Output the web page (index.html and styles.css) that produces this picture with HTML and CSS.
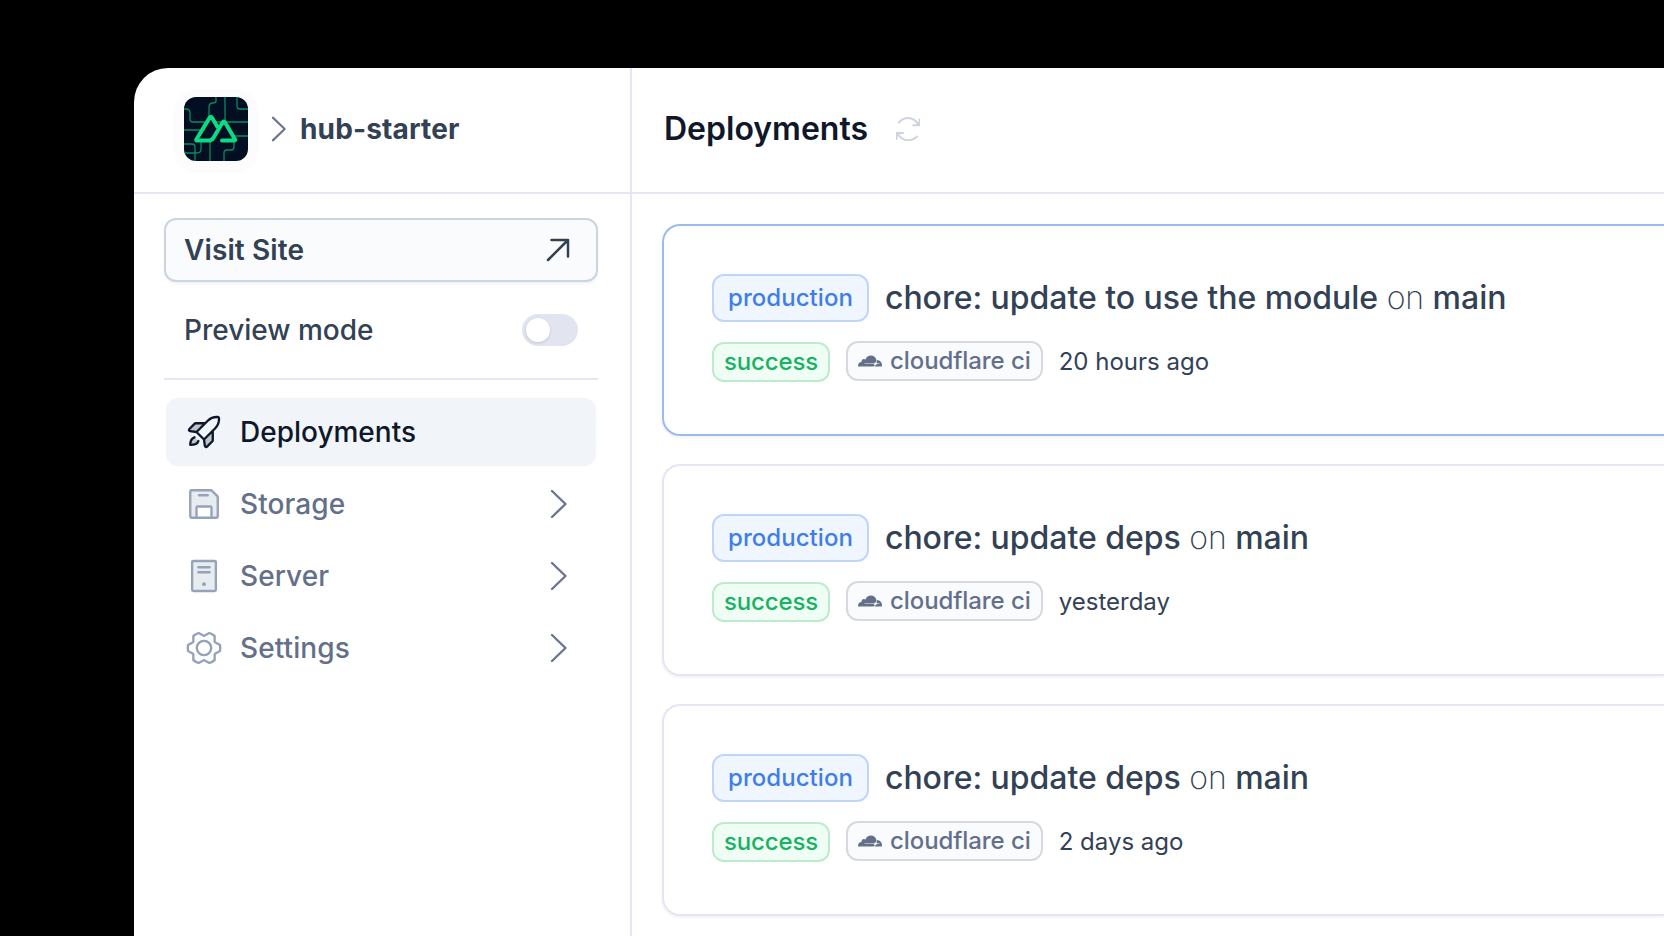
FILE: index.html
```html
<!DOCTYPE html>
<html lang="en">
<head>
<meta charset="utf-8">
<title>Deployments</title>
<link rel="stylesheet" href="styles.css">
</head>
<body>
<svg width="0" height="0" class="sprite" aria-hidden="true">
  <symbol id="caret" viewBox="0 0 20 32"><path d="M3 3l13.500 13L3 29" fill="none" stroke="currentColor" stroke-width="2.400" stroke-linecap="round" stroke-linejoin="round"/></symbol>
  <symbol id="cloud" viewBox="0 0 24 24"><path fill="currentColor" d="M16.5088 16.8447c.1475-.5068.0908-.9707-.1553-1.3154-.2246-.3164-.6045-.499-1.0615-.5205l-8.6592-.1123a.1559.1559 0 0 1-.1333-.0713c-.0283-.042-.0351-.0986-.021-.1553.0278-.084.1123-.1484.2036-.1562l8.7359-.1123c1.0351-.0489 2.1601-.8868 2.5537-1.9136l.499-1.3013c.0215-.0561.0293-.1128.0147-.168-.5625-2.5463-2.835-4.4453-5.5499-4.4453-2.5039 0-4.6284 1.6177-5.3876 3.8614-.4927-.3658-1.1187-.5625-1.794-.499-1.2026.119-2.1665 1.083-2.2861 2.2856-.0283.31-.0069.6128.0635.894C1.5683 13.171 0 14.7754 0 16.752c0 .1748.0142.3515.0352.5273.0141.083.0844.1475.1689.1475h15.9814c.0909 0 .1758-.0645.2032-.1553l.12-.4268zm2.7568-5.5634c-.0771 0-.1611 0-.2383.0112-.0566 0-.1054.0415-.127.0976l-.3378 1.1744c-.1475.5068-.0918.9707.1543 1.3164.2256.3164.6055.498 1.0625.5195l1.8437.1133c.0557 0 .1055.0263.1329.0703.0283.043.0351.1074.0214.1562-.0283.084-.1132.1485-.204.1553l-1.921.1123c-1.041.0488-2.1582.8867-2.5527 1.914l-.1406.3585c-.0283.0713.0215.1416.0986.1416h6.5977c.0771 0 .1474-.0489.169-.126.1122-.4082.1757-.837.1757-1.2803 0-2.6025-2.125-4.727-4.7344-4.727"/></symbol>
</svg>
<div class="window">
  <aside class="sidebar">
    <div class="project">
      <span class="logo">
        <svg viewBox="0 0 64 64" width="64" height="64">
          <g class="circuit">
            <path d="M0 12h2q4 0 4 4v6q0 3 3 3h55M32 0v4q0 2-3 2q-4 0-4 4v14M41 0v25M53 0v9q0 3 3 3h8M0 33h18M64 39H48M0 47h8q3 0 3 3v14M17 44v8q0 4-4 4H0M26 44v20M50 44v6q0 3-3 3h-4q-3 0-3 3v8"/>
          </g>
          <path class="shade" d="M13 43.500L26.500 20.500 33 30.500l6.500-6.500L52 43.500Z"/>
          <path class="mark" d="M13 43.500h12c2 0 3.300-.8 4.500-2.800L38.700 25.300c.7-1.200 1.500-1.200 2.200 0L51 42.300c.4.800 0 1.200-.8 1.200H38M13 43.500c-.8 0-1-.4-.5-1.200L25.700 20.600c.7-1.200 1.500-1.200 2.200 0l5.600 9.400"/>
        </svg>
      </span>
      <svg class="crumb" viewBox="0 0 20 32"><use href="#caret"/></svg>
      <span class="project-name">hub-starter</span>
    </div>
    <div class="side-body">
      <a class="visit"><span>Visit Site</span>
        <svg width="24" height="24" viewBox="0 0 24 24"><path d="M2 22L22 2M5.500 2H22V18.500"/></svg>
      </a>
      <div class="preview"><span>Preview mode</span><span class="toggle"><span class="knob"></span></span></div>
      <nav class="nav">
        <a class="item active">
          <svg class="icon" viewBox="0 0 256 256"><path class="tone" d="M184 120v61.650a8 8 0 0 1-2.340 5.650l-34.350 34.350a8 8 0 0 1-13.570-4.530L128 176ZM136 72H74.350a8 8 0 0 0-5.650 2.340L34.350 108.690a8 8 0 0 0 4.530 13.570L80 128ZM40 210c28 0 48-8 52-26L68 163C50 170 40 188 40 210Z"/><path class="line" d="M92 186C87 202 68 210 40 210c0-26 10-42 27-48M184 120v61.650a8 8 0 0 1-2.340 5.650l-34.350 34.350a8 8 0 0 1-13.570-4.530L128 176M136 72H74.350a8 8 0 0 0-5.650 2.340L34.350 108.690a8 8 0 0 0 4.530 13.570L80 128M128 176 80 128 152.230 55.800C173.540 34 198 31 216.500 32a8 8 0 0 1 7.500 7.500c1 18.500-2 43-23.800 64.300Z"/></svg>
          <span>Deployments</span>
        </a>
        <a class="item">
          <svg class="icon" viewBox="0 0 256 256"><path class="tone" d="M216 83.310V208a8 8 0 0 1-8 8H176V152a8 8 0 0 0-8-8H88a8 8 0 0 0-8 8v64H48a8 8 0 0 1-8-8V48a8 8 0 0 1 8-8H172.690a8 8 0 0 1 5.650 2.340l35.320 35.320a8 8 0 0 1 2.340 5.650Z"/><path class="line" d="M216 83.310V208a8 8 0 0 1-8 8H48a8 8 0 0 1-8-8V48a8 8 0 0 1 8-8H172.690a8 8 0 0 1 5.650 2.340l35.320 35.320a8 8 0 0 1 2.340 5.650ZM80 216V152a8 8 0 0 1 8-8h80a8 8 0 0 1 8 8v64M152 72H96"/></svg>
          <span>Storage</span><svg class="chev" viewBox="0 0 20 32"><use href="#caret"/></svg>
        </a>
        <a class="item">
          <svg class="icon" viewBox="0 0 256 256"><rect class="tone" x="52" y="32" width="152" height="192" rx="8"/><rect class="line" x="52" y="32" width="152" height="192" rx="8"/><path class="line" d="M92 72h72M92 104h72"/><circle cx="128" cy="180" r="12" fill="currentColor"/></svg>
          <span>Server</span><svg class="chev" viewBox="0 0 20 32"><use href="#caret"/></svg>
        </a>
        <a class="item">
          <svg class="icon" viewBox="0 0 256 256"><circle class="line" cx="128" cy="128" r="46"/><path class="line" d="M130.050 206.110c-1.340 0-2.690 0-4 0L94 224a104.610 104.610 0 0 1-34.110-19.200l-.12-36c-.71-1.120-1.380-2.250-2-3.410L25.900 147.240a99.150 99.150 0 0 1 0-38.460l31.840-18.100c.65-1.150 1.320-2.290 2-3.410l.16-36A104.580 104.580 0 0 1 94 32l32 17.890c1.340 0 2.690 0 4 0L162 32a104.610 104.610 0 0 1 34.110 19.200l.12 36c.71 1.120 1.380 2.250 2 3.410l31.850 18.140a99.150 99.150 0 0 1 0 38.460l-31.840 18.100c-.65 1.150-1.320 2.290-2 3.410l-.16 36A104.580 104.580 0 0 1 162 224Z"/></svg>
          <span>Settings</span><svg class="chev" viewBox="0 0 20 32"><use href="#caret"/></svg>
        </a>
      </nav>
    </div>
  </aside>
  <main class="main">
    <header class="head">
      <h1>Deployments</h1>
      <svg class="refresh" width="24" height="24" viewBox="0 0 24 24"><path d="M3 5.500C5.500 2.500 8.500 1 12 1c4.200 0 7.500 2 10.500 6.500M23.500 2.500V8.300H17.200M21 19.500C18.500 22 15.500 23.200 12 23.200c-4.200 0-7.500-2-10.500-6.500M.7 22V16H7"/></svg>
    </header>
    <div class="cards">
      <article class="card current">
        <div class="row title"><span class="badge env">production</span><span class="message">chore: update to use the module <i>on</i> main</span></div>
        <div class="row meta"><span class="badge ok">success</span><span class="badge ci"><svg width="24" height="24"><use href="#cloud"/></svg><span>cloudflare ci</span></span><time>20 hours ago</time></div>
      </article>
      <article class="card">
        <div class="row title"><span class="badge env">production</span><span class="message">chore: update deps <i>on</i> main</span></div>
        <div class="row meta"><span class="badge ok">success</span><span class="badge ci"><svg width="24" height="24"><use href="#cloud"/></svg><span>cloudflare ci</span></span><time>yesterday</time></div>
      </article>
      <article class="card">
        <div class="row title"><span class="badge env">production</span><span class="message">chore: update deps <i>on</i> main</span></div>
        <div class="row meta"><span class="badge ok">success</span><span class="badge ci"><svg width="24" height="24"><use href="#cloud"/></svg><span>cloudflare ci</span></span><time>2 days ago</time></div>
      </article>
    </div>
  </main>
</div>
</body>
</html>
```
FILE: styles.css
```css
* { box-sizing: border-box; }
body {
  margin: 0;
  height: 936px;
  padding: 68px 0 0 134px;
  overflow: hidden;
  background: #000;
  color: #334155;
  font-family: Inter, "Liberation Sans", sans-serif;
  font-weight: 500;
}
.sprite { display: none; }
svg { flex: none; }
.window {
  display: flex;
  height: 868px;
  background: #fff;
  border-top-left-radius: 34px;
  overflow: hidden;
}
.sidebar {
  flex: none;
  width: 498px;
  border-right: 2px solid #e4e6f3;
}
.project {
  display: flex;
  align-items: center;
  height: 126px;
  padding: 0 0 2px 50px;
  border-bottom: 2px solid #e4e6f3;
}
.logo {
  width: 64px;
  height: 64px;
  overflow: hidden;
  border-radius: 12px;
  background: #020f22;
  box-shadow: 0 2px 0 10px #fcfcfd;
}
.logo svg { display: block; }
.circuit { fill: none; stroke: #078a62; stroke-width: 1.3; }
.shade { fill: #020f22; }
.mark { fill: none; stroke: #0bdb85; stroke-width: 4; stroke-linecap: round; stroke-linejoin: round; }
.crumb { width: 18px; height: 28px; margin-left: 22px; color: #6b7590; }
.project-name {
  margin-left: 12px;
  font-size: 28px;
  font-weight: 700;
  letter-spacing: .15px;
}
.side-body { padding: 24px 32px 0 30px; }
.visit {
  display: flex;
  align-items: center;
  justify-content: space-between;
  height: 64px;
  padding: 0 26px 0 18px;
  border: 2px solid #cbd5e1;
  border-radius: 12px;
  background: #f9fbfd;
  box-shadow: 0 2px 3px rgba(15, 23, 42, .05);
  font-size: 28px;
  font-weight: 600;
  letter-spacing: .1px;
}
.visit svg { fill: none; stroke: currentColor; stroke-width: 2.5; stroke-linecap: round; stroke-linejoin: round; }
.preview {
  display: flex;
  align-items: center;
  justify-content: space-between;
  height: 98px;
  padding: 0 20px;
  border-bottom: 2px solid #e4e6f3;
  font-size: 28px;
}
.toggle { width: 56px; height: 32px; padding: 4px; border-radius: 16px; background: #e2e5f0; }
.knob { display: block; width: 24px; height: 24px; border-radius: 50%; background: #fff; box-shadow: 0 1px 3px rgba(15, 23, 42, .15); }
.nav { display: grid; gap: 4px; padding: 18px 2px 0; }
.item {
  display: flex;
  align-items: center;
  height: 68px;
  padding: 0 27px 0 18px;
  border-radius: 12px;
  color: #64708a;
  font-size: 28px;
}
.item span { flex: 1; letter-spacing: .1px; }
.item.active { background: #f1f5f9; color: #0f172a; }
.item.active span { letter-spacing: 0; }
.icon { width: 40px; height: 40px; margin-right: 16px; color: #94a3b8; }
.active .icon { color: #0f172a; }
.tone { fill: currentColor; opacity: .22; }
.line { fill: none; stroke: currentColor; stroke-width: 15; stroke-linecap: round; stroke-linejoin: round; }
.chev { width: 20px; height: 32px; color: #6b7590; }
.main { flex: 1; min-width: 0; }
.head {
  display: flex;
  align-items: center;
  height: 126px;
  padding: 0 0 3px 32px;
  border-bottom: 2px solid #e4e6f3;
}
h1 { margin: 0; color: #0f172a; font-size: 32px; font-weight: 600; }
.refresh { margin-left: 28px; fill: none; stroke: #ced3de; stroke-width: 2; stroke-linecap: round; stroke-linejoin: round; }
.cards { display: grid; gap: 28px; padding: 30px 0 0 30px; }
.card {
  height: 212px;
  padding: 48px;
  border: 2px solid #e4e6f3;
  border-right: 0;
  border-radius: 18px 0 0 18px;
  box-shadow: 0 2px 3px rgba(15, 23, 42, .05);
}
.card.current { border-color: #9bbaf3; }
.row { display: flex; align-items: center; gap: 16px; white-space: nowrap; }
.title { height: 48px; font-size: 32px; }
.message { padding-bottom: 1px; letter-spacing: -.03px; }
.title i { font-style: normal; font-weight: 200; }
.meta { height: 40px; margin-top: 20px; font-size: 24px; }
.meta time { padding-bottom: 2px; font-weight: 400; }
.badge {
  display: flex;
  align-items: center;
  border: 2px solid;
  border-radius: 12px;
  font-size: 24px;
}
.env { height: 48px; padding: 0 14px 2px; background: #eff6ff; border-color: #bfd5fa; color: #3f7ee8; letter-spacing: .05px; }
.ok { height: 40px; padding: 0 10px 2px; background: #effdf4; border-color: #bcebcd; color: #16b364; letter-spacing: -.15px; }
.ci { height: 40px; margin-top: -2px; padding: 0 10px; gap: 8px; background: #f9fbfd; border-color: #d5d9e1; color: #64708a; }
.ci span { padding-bottom: 2px; letter-spacing: -.07px; }
```
